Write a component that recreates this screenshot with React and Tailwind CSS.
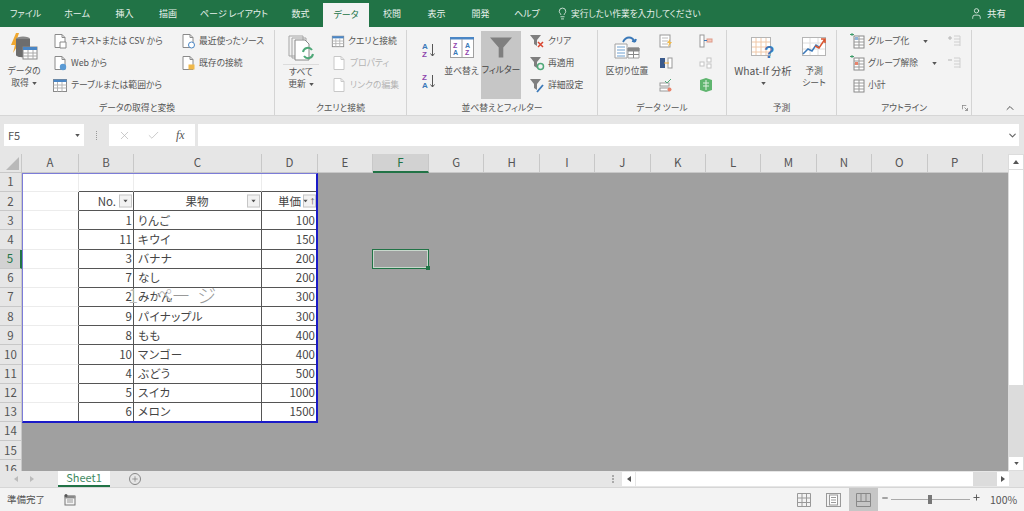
import React from "react";
import { ChevronDown, ChevronUp, X, Check, Plus, Minus, Lightbulb, User } from "lucide-react";

const Caret = ({ className = "" }) => (
  <svg viewBox="0 0 6 4" className={`w-[5px] h-[3px] shrink-0 ${className}`}>
    <path d="M0 0h6L3 4z" fill="#555" />
  </svg>
);

// --- small document style icons ---
const DocIcon = ({ badge, muted }) => (
  <svg viewBox="0 0 16 16" className="w-4 h-4 shrink-0">
    <path d="M3 1.500h7l3 3v10H3z" fill="#fff" stroke={muted ? "#c8c8c8" : "#8a8a8a"} />
    <path d="M10 1.500v3h3" fill="none" stroke={muted ? "#c8c8c8" : "#8a8a8a"} />
    {badge === "text" && <path d="M8 9h6v6H8z" fill="#fff" stroke="#888" />}
    {badge === "web" && <circle cx="11" cy="12" r="3.2" fill="#5b9bd5" />}
    {badge === "clock" && <circle cx="11.500" cy="12" r="3" fill="#fff" stroke="#4a86c5" />}
    {badge === "lock" && <rect x="8.500" y="9.500" width="6" height="5" fill="#f0b849" />}
  </svg>
);

const TableIcon = ({ head = "#4a86c5", className = "w-4 h-4" }) => (
  <svg viewBox="0 0 16 16" className={`${className} shrink-0`}>
    <rect x="1.500" y="2.500" width="13" height="12" fill="#fff" stroke="#8a8a8a" />
    <path d="M1.500 2.500h13V5h-13z" fill={head} />
    <path d="M1.500 8h13M1.500 11h13M5.500 5v9.500M10 5v9.500" stroke="#b5b5b5" fill="none" />
  </svg>
);

const FunnelIcon = ({ color = "#7f7f7f", className = "w-4 h-4", children }) => (
  <svg viewBox="0 0 16 16" className={`${className} shrink-0`}>
    <path d="M1 2h11L8 7v6L5 11V7z" fill={color} />
    {children}
  </svg>
);

const GroupIcon = ({ mark }) => (
  <svg viewBox="0 0 16 16" className="w-4 h-4 shrink-0">
    <rect x="5" y="3" width="10" height="12" fill="#fff" stroke="#8a8a8a" />
    <path d="M5 6h10M5 9h10M5 12h10M10 3v12" stroke="#9a9a9a" fill="none" />
    {mark === "add" && <path d="M1 1.500h4M3 0v3" stroke="#3f9c6b" />}
    {mark === "del" && <path d="M1 1.500h4M3 0v3" stroke="#3f9c6b" />}
    {mark === "del" && <rect x="6" y="7" width="3" height="3" fill="#e8836b" />}
    {mark === "add" && <rect x="6" y="4" width="3" height="3" fill="#8fb4d9" />}
  </svg>
);

const MutedOutline = ({ sign }) => (
  <svg viewBox="0 0 14 14" className="w-[14px] h-[14px]">
    <path d="M7 2h6M7 5h6M7 8h6M7 11h6M13 2v10" stroke="#cfcfcf" fill="none" />
    {sign === "+" && <path d="M1 4h4M3 2v4" stroke="#b5b5b5" />}
    {sign === "-" && <path d="M1 4h4" stroke="#b5b5b5" />}
  </svg>
);

const SmallItem = ({ icon, label, muted, caret }) => (
  <div className={`flex items-center gap-[3px] h-[22px] whitespace-nowrap ${muted ? "text-[#b4b4b4]" : "text-[#555]"}`}>
    {icon}
    <span>{label}</span>
    {caret && <Caret className={caret} />}
  </div>
);

const Group = ({ width, label, children, launcher }) => (
  <div className={`${width} h-[85px] mt-[3px] border-r border-[#d4d4d4] flex flex-col relative shrink-0`}>
    <div className="h-[71px] flex">{children}</div>
    <div className="h-[14px] leading-[14px] text-center text-[#555] whitespace-nowrap">{label}</div>
    {launcher && (
      <svg viewBox="0 0 7 7" className="absolute right-[3px] bottom-[4px] w-[6px] h-[6px]">
        <path d="M0 .5h5M.5 0v5M3 3l3.500 3.500M6.500 3.500v3h-3" stroke="#888" fill="none" />
      </svg>
    )}
  </div>
);

const Ribbon = () => (
  <div className="h-[89px] shrink-0 bg-[#f3f3f3] border-b border-[#d6d6d6] flex text-[8.8px]">
    <Group width="w-[275px]" label="データの取得と変換">
      <div className="w-[36px] ml-[6px] flex flex-col items-center pt-[3px] text-center leading-[12px] text-[#555] whitespace-nowrap">
        <svg viewBox="0 0 28 28" className="w-[28px] h-[28px]">
          <path d="M6 0L1 12h4l-2 8 7-11H6l3-9z" fill="#f0a830" />
          <ellipse cx="13" cy="6" rx="7" ry="2.500" fill="#888" />
          <path d="M6 6v16c0 3 14 3 14 0V6z" fill="#6d6d6d" />
          <rect x="13" y="14" width="14" height="12" fill="#fff" stroke="#8a8a8a" />
          <path d="M13 14h14v3H13z" fill="#4a86c5" />
          <path d="M13 20h14M13 23h14M18 17v9M23 17v9" stroke="#aaa" />
        </svg>
        <div className="mt-[4px]">データの</div>
        <div className="flex items-center gap-[3px]">取得<Caret /></div>
      </div>
      <div className="w-[128px] ml-[10px]">
        <SmallItem icon={<DocIcon badge="text" />} label="テキストまたは CSV から" />
        <SmallItem icon={<DocIcon badge="web" />} label="Web から" />
        <SmallItem icon={<TableIcon />} label="テーブルまたは範囲から" />
      </div>
      <div>
        <SmallItem icon={<DocIcon badge="clock" />} label="最近使ったソース" />
        <SmallItem icon={<DocIcon badge="lock" />} label="既存の接続" />
      </div>
    </Group>

    <Group width="w-[132px]" label="クエリと接続">
      <div className="w-[36px] ml-[8px] flex flex-col items-center pt-[5px] text-center leading-[12px] text-[#555] whitespace-nowrap">
        <svg viewBox="0 0 30 26" className="w-[30px] h-[26px]">
          <path d="M3 1h14v20H3zM6 3h14v20H6z" fill="#f2f2f2" stroke="#a5a5a5" />
          <path d="M9 5h10l4 4v16H9z" fill="#fff" stroke="#8a8a8a" />
          <path d="M17 17a5 5 0 0 1 9-2M27 19a5 5 0 0 1-9 2" fill="none" stroke="#4fa878" strokeWidth="2" />
        </svg>
        <div className="w-[36px] border-t border-[#dcdcdc] mt-[3px] pt-[1px]">すべて</div>
        <div className="flex items-center gap-[3px]">更新<Caret /></div>
      </div>
      <div className="ml-[12px]">
        <SmallItem icon={<TableIcon className="w-[14px] h-[14px]" />} label="クエリと接続" />
        <SmallItem muted icon={<DocIcon muted />} label="プロパティ" />
        <SmallItem muted icon={<DocIcon muted />} label="リンクの編集" />
      </div>
    </Group>

    <Group width="w-[191px]" label="並べ替えとフィルター">
      <div className="w-[16px] ml-[14px] flex flex-col items-center pt-[12px] gap-[15px]">
        <svg viewBox="0 0 14 16" className="w-[14px] h-[16px]">
          <text x="0" y="7" fontSize="8" fontWeight="700" fill="#3a78b8" fontFamily="Liberation Sans">A</text>
          <text x="0" y="15" fontSize="8" fontWeight="700" fill="#8e44ad" fontFamily="Liberation Sans">Z</text>
          <path d="M10.500 2v12M8.500 11.500l2 2.500 2-2.500" stroke="#555" fill="none" />
        </svg>
        <svg viewBox="0 0 14 16" className="w-[14px] h-[16px]">
          <text x="0" y="7" fontSize="8" fontWeight="700" fill="#8e44ad" fontFamily="Liberation Sans">Z</text>
          <text x="0" y="15" fontSize="8" fontWeight="700" fill="#3a78b8" fontFamily="Liberation Sans">A</text>
          <path d="M10.500 2v12M8.500 11.500l2 2.500 2-2.500" stroke="#555" fill="none" />
        </svg>
      </div>
      <div className="w-[35px] ml-[7px] flex flex-col items-center pt-[7px] text-[#555] whitespace-nowrap">
        <svg viewBox="0 0 24 21" className="w-[24px] h-[21px]">
          <rect x=".5" y="1.500" width="23" height="19" fill="#fff" stroke="#a0a0a0" />
          <path d="M0 0h24v2.500H0z" fill="#4a86c5" />
          <path d="M12 2v18" stroke="#a0a0a0" />
          <text x="3" y="11" fontSize="7" fontWeight="700" fill="#8e44ad" fontFamily="Liberation Sans">Z</text>
          <text x="3" y="18" fontSize="7" fontWeight="700" fill="#3a78b8" fontFamily="Liberation Sans">A</text>
          <text x="15" y="11" fontSize="7" fontWeight="700" fill="#3a78b8" fontFamily="Liberation Sans">A</text>
          <text x="15" y="18" fontSize="7" fontWeight="700" fill="#8e44ad" fontFamily="Liberation Sans">Z</text>
        </svg>
        <div className="mt-[7px] leading-[12px]">並べ替え</div>
      </div>
      <div className="w-[40px] h-[68px] mt-[1px] ml-[2px] bg-[#c6c6c6] flex flex-col items-center pt-[6px] text-[#444] whitespace-nowrap">
        <svg viewBox="0 0 24 22" className="w-[22px] h-[21px]">
          <path d="M0 0h24L14.500 11v11h-5V11z" fill="#7f7f7f" />
        </svg>
        <div className="mt-[6px] leading-[12px]">フィルター</div>
      </div>
      <div className="ml-[8px]">
        <SmallItem
          icon={<FunnelIcon><path d="M9 9l5 5M14 9l-5 5" stroke="#d9452f" strokeWidth="1.500" /></FunnelIcon>}
          label="クリア"
        />
        <SmallItem
          icon={<FunnelIcon><circle cx="11.500" cy="11.500" r="3" fill="none" stroke="#4fa878" strokeWidth="1.500" /></FunnelIcon>}
          label="再適用"
        />
        <SmallItem
          icon={<FunnelIcon><path d="M8 15l6-7" stroke="#3a78b8" strokeWidth="1.800" /></FunnelIcon>}
          label="詳細設定"
        />
      </div>
    </Group>

    <Group width="w-[129px]" label="データ ツール">
      <div className="w-[44px] ml-[7px] flex flex-col items-center pt-[6px] text-[#555] whitespace-nowrap">
        <svg viewBox="0 0 26 23" className="w-[26px] h-[23px]">
          <path d="M1 8h12v14H1z" fill="#fff" stroke="#a0a0a0" />
          <path d="M3 11h8M3 14h8M3 17h8M3 20h8" stroke="#6fa0d0" />
          <path d="M14 12h11v10H14z" fill="#fff" stroke="#a0a0a0" />
          <path d="M14 12h11v3H14zM19.500 15v7M14 18.500h11" fill="#888" stroke="#888" />
          <path d="M9 6c3-6 9-6 12 0M21 6l-3-1M21 6l1-3" stroke="#3a78b8" strokeWidth="1.800" fill="none" />
        </svg>
        <div className="mt-[6px] leading-[12px]">区切り位置</div>
      </div>
      <div className="ml-[10px] flex flex-col">
        <div className="h-[22px] flex items-center">
          <svg viewBox="0 0 14 14" className="w-[14px] h-[14px]">
            <rect x="1" y="1" width="10" height="12" fill="#fff" stroke="#999" />
            <path d="M3 4h6M3 7h6M3 10h6" stroke="#bbb" />
            <path d="M11 5l-3 4h2l-1 4 4-5h-2z" fill="#f0b849" />
          </svg>
        </div>
        <div className="h-[22px] flex items-center">
          <svg viewBox="0 0 14 14" className="w-[14px] h-[14px]">
            <rect x="1" y="2" width="5" height="10" fill="#3a5a8c" />
            <rect x="9" y="2" width="4" height="10" fill="#fff" stroke="#999" />
            <path d="M5 7h5" stroke="#f0a830" />
          </svg>
        </div>
        <div className="h-[22px] flex items-center">
          <svg viewBox="0 0 14 14" className="w-[14px] h-[14px]">
            <rect x="1" y="5" width="9" height="3" fill="#fff" stroke="#999" />
            <rect x="1" y="10" width="9" height="3" fill="#fff" stroke="#999" />
            <path d="M6 3l2 2 4-4" stroke="#4fa878" fill="none" />
            <circle cx="10.500" cy="11.500" r="2" fill="#e8836b" />
          </svg>
        </div>
      </div>
      <div className="ml-[26px] flex flex-col">
        <div className="h-[22px] flex items-center">
          <svg viewBox="0 0 14 14" className="w-[14px] h-[14px]">
            <rect x="1" y="1" width="4" height="12" fill="#fff" stroke="#999" />
            <rect x="8" y="5" width="5" height="3" fill="#f6c9bb" stroke="#d98" />
            <path d="M5 6.500h3" stroke="#3a78b8" />
          </svg>
        </div>
        <div className="h-[22px] flex items-center">
          <svg viewBox="0 0 14 14" className="w-[14px] h-[14px]">
            <rect x="1" y="6" width="4" height="4" fill="#fff" stroke="#c4c4c4" />
            <rect x="8" y="2" width="4" height="4" fill="#fff" stroke="#c4c4c4" />
            <rect x="8" y="8" width="4" height="4" fill="#fff" stroke="#c4c4c4" />
          </svg>
        </div>
        <div className="h-[22px] flex items-center">
          <svg viewBox="0 0 14 14" className="w-[14px] h-[14px]">
            <path d="M7 0l6 2v10l-6 2-6-2V2z" fill="#5fb56f" />
            <path d="M4 5h6M4 8h6M7 2v10" stroke="#dff0e2" />
          </svg>
        </div>
      </div>
    </Group>

    <Group width="w-[110px]" label="予測">
      <div className="w-[60px] ml-[6px] flex flex-col items-center pt-[7px] text-[#555] whitespace-nowrap">
        <svg viewBox="0 0 24 23" className="w-[24px] h-[23px]">
          <rect x=".5" y=".5" width="19" height="18" fill="#fff" stroke="#b5b5b5" />
          <path d="M5 1v17M10 1v17M15 1v17M1 5h18M1 10h18M1 15h18" stroke="#f0c8a8" />
          <text x="13" y="21" fontSize="17" fontWeight="700" fill="#3a78b8" fontFamily="Liberation Sans">?</text>
        </svg>
        <div className="mt-[5px] leading-[12px] text-[10.300px]">What-If 分析</div>
        <Caret className="mt-[5px]" />
      </div>
      <div className="w-[26px] ml-[8px] flex flex-col items-center pt-[7px] text-[#555] leading-[12px] whitespace-nowrap">
        <svg viewBox="0 0 24 21" className="w-[24px] h-[21px] mb-[7px]">
          <rect x=".5" y=".5" width="23" height="18" fill="#fff" stroke="#b5b5b5" />
          <path d="M1 6h22M1 12h22M8 1v17M16 1v17" stroke="#dedede" />
          <path d="M1 17l5-5 4 2 4-6 3 2" stroke="#3a78b8" fill="none" strokeWidth="1.500" />
          <path d="M13 9l4 2 6-9M19 2h4v4" stroke="#d9552f" fill="none" strokeWidth="1.500" />
        </svg>
        <div>予測</div>
        <div>シート</div>
      </div>
    </Group>

    <Group width="w-[135px]" label="アウトライン" launcher>
      <div className="w-[98px] ml-[12px]">
        <SmallItem icon={<GroupIcon mark="add" />} label="グループ化" caret="ml-[11px]" />
        <SmallItem icon={<GroupIcon mark="del" />} label="グループ解除" caret="ml-[11px]" />
        <SmallItem icon={<GroupIcon />} label="小計" />
      </div>
      <div className="flex flex-col">
        <div className="h-[22px] flex items-center"><MutedOutline sign="+" /></div>
        <div className="h-[22px] flex items-center"><MutedOutline sign="-" /></div>
      </div>
    </Group>

    <div className="flex-1 flex items-end justify-end pr-[8px] pb-[1px]">
      <ChevronUp size={12} strokeWidth={2} className="text-[#555]" />
    </div>
  </div>
);

const tabs = [
  ["ファイル", "w-[51px]"],
  ["ホーム", "w-[52px]"],
  ["挿入", "w-[43px]"],
  ["描画", "w-[44px]"],
  ["ページ レイアウト", "w-[88px]"],
  ["数式", "w-[45px]"],
];
const tabsRight = [
  ["校閲", "w-[46px]"],
  ["表示", "w-[43px]"],
  ["開発", "w-[45px]"],
  ["ヘルプ", "w-[48px]"],
];

const TitleBar = () => (
  <div className="h-[27px] shrink-0 bg-[#217346] flex items-end text-[9px] text-[#e8f1ec]">
    {tabs.map(([t, w]) => (
      <div key={t} className={`${w} h-full flex items-center justify-center whitespace-nowrap`}>{t}</div>
    ))}
    <div className="w-[46px] h-[24px] bg-[#f3f3f3] text-[#217346] flex items-center justify-center">データ</div>
    {tabsRight.map(([t, w]) => (
      <div key={t} className={`${w} h-full flex items-center justify-center whitespace-nowrap`}>{t}</div>
    ))}
    <div className="h-full flex items-center ml-[5px] gap-[2px] whitespace-nowrap">
      <Lightbulb size={13} strokeWidth={1.500} />
      <span className="text-[8.700px]">実行したい作業を入力してください</span>
    </div>
    <div className="h-full ml-auto mr-[18px] flex items-center gap-[4px] text-[9.500px]">
      <User size={13} strokeWidth={1.500} />
      <span>共有</span>
    </div>
  </div>
);

const FormulaBar = () => (
  <div className="h-[30px] shrink-0 bg-[#e6e6e6] flex items-start pt-[8px] pl-[4px] pr-[5px] text-[#555]">
    <div className="w-[80px] h-[22px] bg-white flex items-center justify-between pl-[4px] pr-[4px] text-[11px]">
      <span>F5</span>
      <Caret />
    </div>
    <div className="w-[25px] h-[22px] flex items-center justify-center">
      <div className="h-[9px] border-l border-dotted border-[#999]" />
    </div>
    <div className="w-[86px] h-[22px] bg-white flex items-center pl-[9px] gap-[16px]">
      <X size={13} strokeWidth={1.300} className="text-[#b5b5b5]" />
      <Check size={13} strokeWidth={1.300} className="text-[#b5b5b5]" />
      <span className="font-['Liberation_Serif'] italic text-[12px] text-[#555]">fx</span>
    </div>
    <div className="flex-1 h-[22px] ml-[3px] bg-white flex items-center justify-end pr-[1px]">
      <ChevronDown size={11} strokeWidth={2.500} className="text-[#666]" />
    </div>
  </div>
);

const columns = ["A", "B", "C", "D", "E", "F", "G", "H", "I", "J", "K", "L", "M", "N", "O", "P", ""];

const fruits = [
  [1, "りんご", 100],
  [11, "キウイ", 150],
  [3, "バナナ", 200],
  [7, "なし", 200],
  [2, "みかん", 300],
  [9, "パイナップル", 300],
  [8, "もも", 400],
  [10, "マンゴー", 400],
  [4, "ぶどう", 500],
  [5, "スイカ", 1000],
  [6, "メロン", 1500],
];

const FilterBtn = ({ sorted }) => (
  <span className="absolute right-[1px] top-1/2 -translate-y-1/2 w-[13px] h-[13px] bg-[#f2f2f2] border border-[#c6c6c6] flex items-center justify-center gap-[1px]">
    <Caret />
    {sorted && <span className="text-[7px] leading-none text-[#444]">↑</span>}
  </span>
);

const line = "bg-white border-r border-b border-[#555]";
const light = "bg-white border-r border-b border-[#ececec]";
const colA = "bg-white border-r border-b border-b-[#ececec] border-r-[#555]";
const topOfTable = "bg-white border-r border-b border-r-[#ececec] border-b-[#555]";

const RowHead = ({ n, active }) => (
  <div className={`flex items-center justify-center border-b border-r border-[#c8c8c8] ${active ? "bg-[#d2d2d2] text-[#217346] border-r-2 border-r-[#217346]" : "bg-[#e6e6e6] text-[#555]"}`}>
    {n}
  </div>
);

// grey cells of the page break view
const GreyCells = ({ row }) =>
  columns.slice(4).map((c, i) => <div key={`${i}-${row}`} className="bg-[#a0a0a0]" />);

const Sheet = () => (
  <div className="h-[325px] shrink-0 bg-[#e6e6e6] pt-[8px] flex">
    <div className="flex-1 min-w-0 overflow-hidden relative">
      <div className="grid grid-cols-[22px_57px_55px_128px_56px_55px_56px_repeat(11,55.4px)] grid-rows-[19px] auto-rows-[19.17px] text-[11.5px] text-[#444]">
        {/* header row */}
        <div className="bg-[#e6e6e6] border-r border-b border-[#c8c8c8] flex items-end justify-end p-[2px]">
          <svg viewBox="0 0 12 12" className="w-[13px] h-[13px]"><path d="M12 0v12H0z" fill="#b9b9b9" /></svg>
        </div>
        {columns.map((c, i) => (
          <div
            key={i}
            className={`flex items-center justify-center border-r ${
              c === "F"
                ? "bg-[#d2d2d2] text-[#217346] border-b-2 border-b-[#217346] border-r-[#c8c8c8]"
                : "bg-[#e6e6e6] text-[#555] border-b border-[#c8c8c8]"
            }`}
          >
            {c}
          </div>
        ))}

        {/* row 1 */}
        <RowHead n={1} />
        <div className={light} />
        <div className={topOfTable} /><div className={topOfTable} /><div className={topOfTable} />
        <GreyCells row={1} />

        {/* row 2 */}
        <RowHead n={2} />
        <div className={colA} />
        <div className={`relative flex items-center justify-end pr-[17px] ${line}`}>No.<FilterBtn /></div>
        <div className={`relative flex items-center justify-center pr-[1px] ${line}`}>果物<FilterBtn /></div>
        <div className={`relative flex items-center pl-[16px] ${line}`}>単価<FilterBtn sorted /></div>
        <GreyCells row={2} />

        {fruits.map(([no, name, price], i) => (
          <React.Fragment key={name}>
            <RowHead n={i + 3} active={i === 2} />
            <div className={colA} />
            <div className={`flex items-center justify-end pr-[1px] ${line}`}>{no}</div>
            <div className={`flex items-center pl-[4px] tracking-[0.5px] ${line}`}>{name}</div>
            <div className={`flex items-center justify-end pr-[2px] ${line}`}>{price}</div>
            <GreyCells row={i + 3} />
          </React.Fragment>
        ))}

        {[14, 15, 16].map((n) => (
          <React.Fragment key={n}>
            <RowHead n={n} />
            <div className="bg-[#a0a0a0]" /><div className="bg-[#a0a0a0]" /><div className="bg-[#a0a0a0]" /><div className="bg-[#a0a0a0]" />
            <GreyCells row={n} />
          </React.Fragment>
        ))}
      </div>

      {/* print area outline */}
      <div className="absolute left-[22px] top-[19px] w-[296px] h-[250px] border-2 border-[#1a1ac8] border-l-[#7c7cd8] border-t-[#7c7cd8] border-l border-t pointer-events-none" />
      {/* page watermark */}
      <div className="absolute left-[128px] top-[129px] text-[19px] leading-[24px] font-light text-[#999] whitespace-nowrap pointer-events-none">
        <span className="text-[#b8b8b8]">1</span><span className="ml-[16px] text-[#b8b8b8]">ペ</span><span className="-ml-[2px]">ー</span><span className="ml-[7px]">ジ</span>
      </div>
      {/* selected cell */}
      <div className="absolute left-[372px] top-[95px] w-[57px] h-[20px] border border-[#217346] outline outline-1 -outline-offset-2 outline-[#c8d8cc] pointer-events-none">
        <div className="absolute -right-[2px] -bottom-[2px] w-[4px] h-[4px] bg-[#217346]" />
      </div>
    </div>

    {/* vertical scrollbar */}
    <div className="w-[16px] bg-[#dcdcdc] flex flex-col pt-[1px]">
      <div className="h-[15px] mx-[1px] bg-white flex items-center justify-center border-b border-[#dcdcdc]">
        <svg viewBox="0 0 6 4" className="w-[6px] h-[4px]"><path d="M0 4h6L3 0z" fill="#555" /></svg>
      </div>
      <div className="h-[215px] mx-[1px] bg-white" />
      <div className="mt-auto h-[13px] mx-[1px] mb-[1px] bg-white flex items-center justify-center">
        <Caret />
      </div>
    </div>
  </div>
);

const SheetBar = () => (
  <div className="h-[16px] shrink-0 bg-[#e6e6e6] flex items-center text-[#8a8a8a]">
    <div className="w-[58px] flex items-center gap-[12px] pl-[14px]">
      <svg viewBox="0 0 4 6" className="w-[4px] h-[6px]"><path d="M4 0v6L0 3z" fill="#bbb" /></svg>
      <svg viewBox="0 0 4 6" className="w-[4px] h-[6px]"><path d="M0 0v6l4-3z" fill="#bbb" /></svg>
    </div>
    <div className="w-[52px] h-[16px] bg-white border-b-2 border-[#217346] text-[#3f8a62] text-[11px] leading-[13px] flex items-start justify-center">
      Sheet1
    </div>
    <div className="ml-[19px] w-[12px] h-[12px] rounded-full border border-[#888] flex items-center justify-center">
      <Plus size={8} strokeWidth={2} className="text-[#777]" />
    </div>
    <div className="ml-[471px] h-[8px] border-l-2 border-dotted border-[#aaa]" />
    <div className="ml-[8px] w-[13px] h-[14px] bg-white flex items-center justify-center">
      <svg viewBox="0 0 4 6" className="w-[4px] h-[6px]"><path d="M4 0v6L0 3z" fill="#555" /></svg>
    </div>
    <div className="ml-[1px] w-[337px] h-[14px] bg-white" />
    <div className="w-[24px] h-[14px] bg-[#dcdcdc]" />
    <div className="w-[12px] h-[14px] bg-white flex items-center justify-center">
      <svg viewBox="0 0 4 6" className="w-[4px] h-[6px]"><path d="M0 0v6l4-3z" fill="#555" /></svg>
    </div>
  </div>
);

const StatusBar = () => (
  <div className="h-[24px] shrink-0 bg-[#f3f3f3] border-t border-[#d6d6d6] flex items-center pr-[7px] text-[9.5px] text-[#555]">
    <span className="ml-[7px] whitespace-nowrap">準備完了</span>
    <svg viewBox="0 0 12 12" className="ml-[19px] w-[12px] h-[12px]">
      <rect x="1" y="2" width="10" height="9" fill="none" stroke="#777" />
      <path d="M1 2h10v2H1zM3 6h6M3 8h6" fill="#777" stroke="#999" />
      <circle cx="2" cy="1.500" r="1.500" fill="#555" />
    </svg>
    <svg viewBox="0 0 14 14" className="ml-auto w-[14px] h-[14px]">
      <path d="M.5.5h13v13H.5zM5 .5v13M9.500.5v13M.5 5h13M.5 9.500h13" fill="none" stroke="#999" />
    </svg>
    <svg viewBox="0 0 15 14" className="ml-[15px] w-[15px] h-[14px]">
      <rect x=".5" y=".5" width="14" height="13" fill="none" stroke="#999" />
      <rect x="3.500" y="2" width="8" height="10" fill="#fff" stroke="#999" />
      <path d="M5 4.500h5M5 7h5M5 9.500h5" stroke="#999" />
    </svg>
    <div className="ml-[8px] w-[29px] h-full bg-[#c6c6c6] flex items-center justify-center">
      <svg viewBox="0 0 15 14" className="w-[15px] h-[14px]">
        <path d="M.5.5h14v13H.5zM5 .5v8M10 .5v8M.5 8.500h14" fill="none" stroke="#888" />
      </svg>
    </div>
    <Minus size={8} strokeWidth={3} className="ml-[3px] -mt-[4px] text-[#555]" />
    <div className="ml-[2px] w-[79px] h-[1px] bg-[#aaa] relative">
      <div className="absolute left-[37px] -top-[4px] w-[4px] h-[9px] bg-[#777]" />
    </div>
    <Plus size={9} strokeWidth={2.500} className="ml-[2px] -mt-[4px] text-[#555]" />
    <span className="ml-[9px] w-[27px] text-[10.5px]">100%</span>
  </div>
);

export default function App() {
  return (
    <div className="w-[1024px] h-[511px] overflow-hidden flex flex-col bg-white font-['Noto_Sans_CJK_JP','Liberation_Sans',sans-serif] [font-feature-settings:'palt']">
      <TitleBar />
      <Ribbon />
      <FormulaBar />
      <Sheet />
      <SheetBar />
      <StatusBar />
    </div>
  );
}
